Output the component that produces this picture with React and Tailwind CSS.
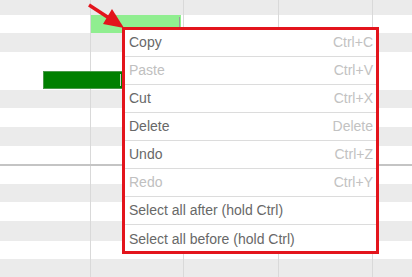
import React from "react";

const upperRows = [
  { h: 15, bg: "bg-[#ebebeb]" },
  { h: 18, bg: "bg-white", light: true },
  { h: 19, bg: "bg-[#ebebeb]" },
  { h: 18, bg: "bg-white" },
  { h: 20, bg: "bg-white", dark: true },
  { h: 18, bg: "bg-[#ebebeb]" },
  { h: 19, bg: "bg-white" },
  { h: 19, bg: "bg-[#ebebeb]" },
  { h: 18, bg: "bg-white" },
];

const lowerRows = [
  { h: 18, bg: "bg-white" },
  { h: 18, bg: "bg-[#ebebeb]" },
  { h: 19, bg: "bg-white" },
  { h: 20, bg: "bg-[#ebebeb]" },
  { h: 18, bg: "bg-white" },
  { h: 19, bg: "bg-[#ebebeb]" },
];

function Cells() {
  return (
    <>
      <div className="w-[91px] h-full border-r border-[#d9d9d9] shrink-0" />
      <div className="w-[93px] h-full border-r border-[#d9d9d9] shrink-0" />
      <div className="w-[95px] h-full border-r border-[#d9d9d9] shrink-0" />
      <div className="w-[94px] h-full border-r border-[#d9d9d9] shrink-0" />
      <div className="flex-1 h-full" />
    </>
  );
}

function Row({ h, bg, light, dark }) {
  return (
    <div className={`relative flex ${bg}`} style={{ height: h }}>
      <Cells />
      {light && (
        <div className="absolute left-[91px] top-0 w-[90px] h-full bg-[#90ee90]">
          <div className="absolute right-[1px] top-[2px] w-px h-[10px] bg-[#9a9a9a]" />
        </div>
      )}
      {dark && (
        <div className="absolute left-[43px] top-[1px] w-[80px] h-[18px] bg-[#008000] border border-[#4a9a4a]">
          <div className="absolute right-[1px] top-[2px] w-px h-[12px] bg-[#cfcfcf]" />
        </div>
      )}
    </div>
  );
}

const items = [
  { label: "Copy", key: "Ctrl+C" },
  { label: "Paste", key: "Ctrl+V", disabled: true },
  { label: "Cut", key: "Ctrl+X" },
  { label: "Delete", key: "Delete" },
  { label: "Undo", key: "Ctrl+Z" },
  { label: "Redo", key: "Ctrl+Y", disabled: true },
  { label: "Select all after (hold Ctrl)" },
  { label: "Select all before (hold Ctrl)" },
];

export default function App() {
  return (
    <div
      className="relative w-[412px] h-[277px] overflow-hidden bg-white"
      style={{ fontFamily: '"Liberation Sans", Arial, sans-serif' }}
    >
      <div className="flex flex-col">
        {upperRows.map((r, i) => (
          <Row key={"u" + i} {...r} />
        ))}
        <div className="h-[2px] bg-[#c4c4c4]" />
        {lowerRows.map((r, i) => (
          <Row key={"l" + i} {...r} />
        ))}
      </div>

      {/* context menu */}
      <div className="absolute left-[124px] top-[28px] w-[254px] bg-white border border-[#cccccc] flex flex-col">
        {items.map((it, i) => (
          <div
            key={i}
            className={`h-[28px] flex items-center justify-between pl-[4px] pr-[4px] text-[14px] ${
              i < items.length - 1 ? "border-b border-[#dcdcdc]" : ""
            }`}
          >
            <span className={it.disabled ? "text-[#c0c0c0]" : "text-[#686868]"}>{it.label}</span>
            {it.key && <span className="text-[#c2c2c2]">{it.key}</span>}
          </div>
        ))}
      </div>

      {/* annotation rectangle */}
      <div className="absolute left-[122px] top-[27px] w-[257px] h-[227px] border-[3px] border-[#e3141c] pointer-events-none" />

      {/* annotation arrow */}
      <svg className="absolute left-0 top-0 pointer-events-none" width="412" height="277">
        <line x1="89" y1="5" x2="109" y2="18" stroke="#e3141c" strokeWidth="3.5" />
        <polygon points="124,28 103,24 112,9" fill="#e3141c" />
      </svg>
    </div>
  );
}
